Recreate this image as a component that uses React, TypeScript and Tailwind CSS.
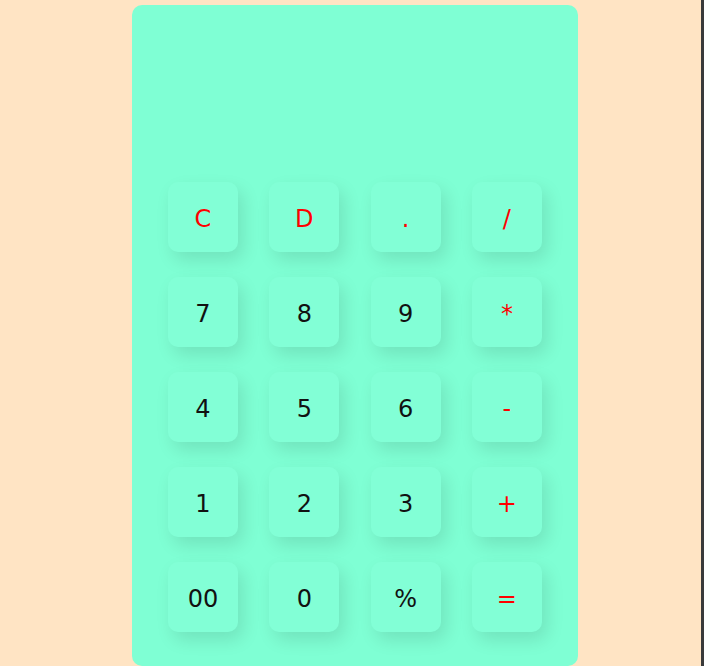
const keys = [
  { label: "C", op: true },
  { label: "D", op: true },
  { label: ".", op: true },
  { label: "/", op: true },
  { label: "7", op: false },
  { label: "8", op: false },
  { label: "9", op: false },
  { label: "*", op: true },
  { label: "4", op: false },
  { label: "5", op: false },
  { label: "6", op: false },
  { label: "-", op: true },
  { label: "1", op: false },
  { label: "2", op: false },
  { label: "3", op: false },
  { label: "+", op: true },
  { label: "00", op: false },
  { label: "0", op: false },
  { label: "%", op: false },
  { label: "=", op: true },
];

export default function App() {
  return (
    <div className="flex h-[666px] w-[704px] overflow-hidden bg-[#ffe4c4] font-['DejaVu_Sans',Verdana,sans-serif]">
      <div className="flex-1">
        <div className="ml-[132px] mt-[5px] flex h-[661px] w-[446px] flex-col rounded-[10px] bg-[#7fffd4]">
          <div className="h-[177px]" />
          <div className="grid grid-cols-[repeat(4,70px)] gap-x-[31.3px] gap-y-[25px] px-[36px]">
            {keys.map((k) => (
              <button
                key={k.label}
                className={
                  "flex h-[70px] w-[70px] items-center justify-center rounded-[10px] bg-[#82ffd6] pt-[3px] text-[24px] shadow-[5px_8px_18px_rgba(0,0,0,0.11)] " +
                  (k.op ? "text-[#ff0000]" : "text-[#111]")
                }
              >
                {k.label}
              </button>
            ))}
          </div>
        </div>
      </div>
      <div className="w-[3px] bg-[#3a3a3a]" />
    </div>
  );
}
